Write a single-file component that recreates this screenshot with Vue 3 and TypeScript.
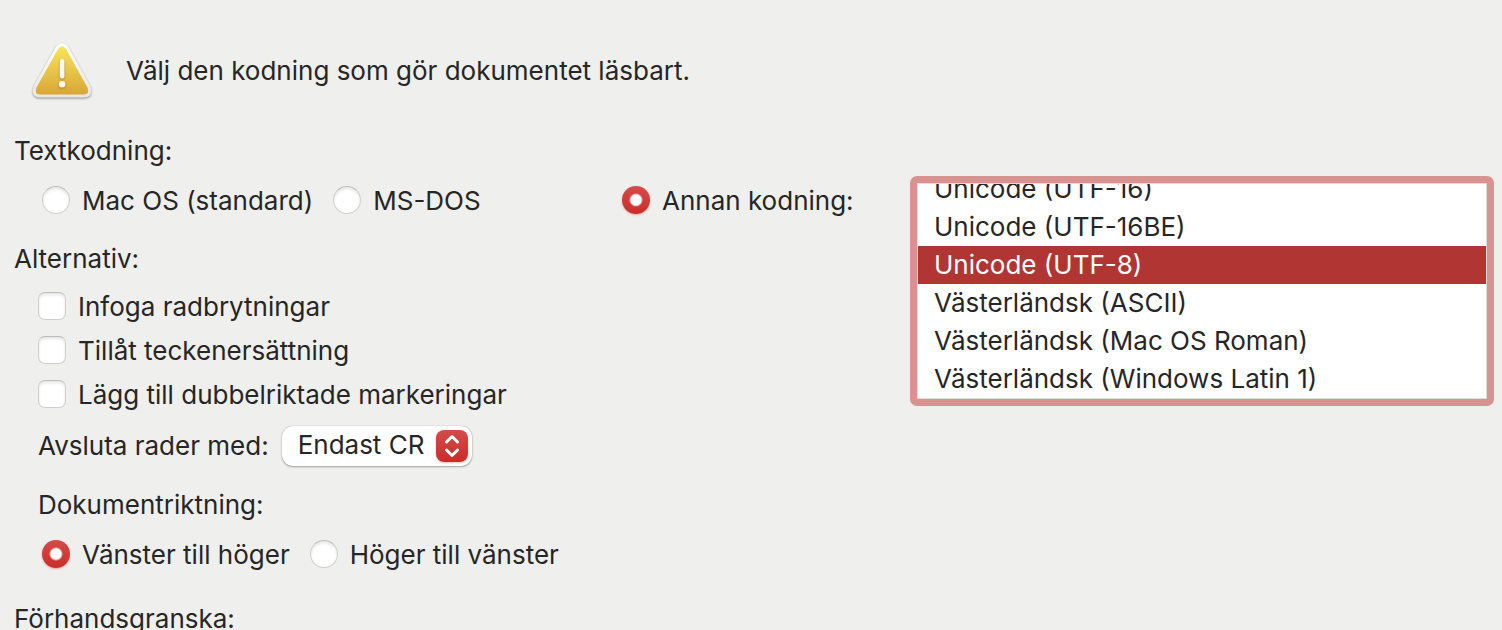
<script setup lang="ts">
import { nextTick, onMounted, ref } from 'vue'

const encodingMode = ref('other')
const encoding = ref('Unicode (UTF-8)')
const encodings: string[] = [
  'Unicode (UTF-16)',
  'Unicode (UTF-16BE)',
  'Unicode (UTF-8)',
  'Västerländsk (ASCII)',
  'Västerländsk (Mac OS Roman)',
  'Västerländsk (Windows Latin 1)',
]
const options = ref([
  { id: 'breaks', label: 'Infoga radbrytningar', on: false },
  { id: 'replace', label: 'Tillåt teckenersättning', on: false },
  { id: 'bidi', label: 'Lägg till dubbelriktade markeringar', on: false },
])
const lineEnding = ref('Endast CR')
const direction = ref('ltr')
const list = ref<HTMLSelectElement | null>(null)

function scrollToEnd() {
  if (list.value) list.value.scrollTop = list.value.scrollHeight
}

onMounted(async () => {
  await nextTick()
  scrollToEnd()
  requestAnimationFrame(() => requestAnimationFrame(scrollToEnd))
})
</script>

<template>
  <main class="dialog">
    <header class="message">
      <svg class="warning" viewBox="0 0 64 64" aria-hidden="true">
        <defs>
          <linearGradient id="gold" x1="0" y1="0" x2="0" y2="1">
            <stop offset="0" stop-color="#f8e45c" />
            <stop offset="1" stop-color="#d9a637" />
          </linearGradient>
          <linearGradient id="rim" x1="0" y1="0" x2="0" y2="1">
            <stop offset="0" stop-color="#ffffff" />
            <stop offset="1" stop-color="#e6e6e6" />
          </linearGradient>
        </defs>
        <path class="rim" d="M26 7.500Q32 0.500 38 7.500L60.500 47.500Q63.500 58 54.500 58.500H9.500Q0.500 58 3.500 47.500Z" fill="url(#rim)" />
        <path d="M28 10Q32 4.500 36 10L57.500 48.500Q60 55 54 55.500H10Q4 55 6.500 48.500Z" fill="url(#gold)" />
        <g class="mark" fill="#fbfbf6">
          <rect x="29.800" y="20" width="4.600" height="19.500" rx="2.300" />
          <circle cx="32.100" cy="45.300" r="3.200" />
        </g>
      </svg>
      <p>Välj den kodning som gör dokumentet läsbart.</p>
    </header>

    <div class="columns">
      <div class="settings">
        <h2 id="enc-title">Textkodning:</h2>
        <div class="radios" role="group" aria-labelledby="enc-title">
          <label class="choice"><input v-model="encodingMode" class="radio" type="radio" name="mode" value="mac" /><span>Mac OS (standard)</span></label>
          <label class="choice"><input v-model="encodingMode" class="radio" type="radio" name="mode" value="dos" /><span>MS-DOS</span></label>
        </div>

        <h2 class="alternatives">Alternativ:</h2>
        <div class="checks">
          <label v-for="o in options" :key="o.id" class="choice"><input v-model="o.on" class="box" type="checkbox" /><span>{{ o.label }}</span></label>
        </div>

        <div class="ending">
          <label for="ending">Avsluta rader med:</label>
          <div class="popup">
            <select id="ending" v-model="lineEnding">
              <option>Endast CR</option>
            </select>
            <svg class="arrows" viewBox="0 0 32 32" aria-hidden="true">
              <path d="M10.500 12L16 6.500L21.500 12M10.500 20L16 25.500L21.500 20" />
            </svg>
          </div>
        </div>

        <h2 id="dir-title" class="direction">Dokumentriktning:</h2>
        <div class="radios" role="group" aria-labelledby="dir-title">
          <label class="choice"><input v-model="direction" class="radio" type="radio" name="dir" value="ltr" /><span>Vänster till höger</span></label>
          <label class="choice"><input v-model="direction" class="radio" type="radio" name="dir" value="rtl" /><span>Höger till vänster</span></label>
        </div>
      </div>

      <label class="choice other"><input v-model="encodingMode" class="radio" type="radio" name="mode" value="other" /><span>Annan kodning:</span></label>

      <div class="listwrap">
        <select ref="list" v-model="encoding" class="list" size="5" aria-label="Annan kodning">
          <option v-for="e in encodings" :key="e" :value="e">{{ e }}</option>
        </select>
      </div>
    </div>

    <h2 class="preview">Förhandsgranska:</h2>
  </main>
</template>

<style>
html,
body {
  background: #efefed;
}
</style>

<style scoped>
.dialog {
  box-sizing: border-box;
  height: 100vh;
  overflow: hidden;
  padding: 39px 8px 0 14px;
  background: #efefed;
  color: #262626;
  font: 26px/32px Inter, "Liberation Sans", sans-serif;
}
.message {
  display: flex;
  align-items: center;
  gap: 32px;
  padding-left: 16px;
}
.warning {
  width: 64px;
  height: 64px;
  overflow: visible;
}
.rim {
  filter: drop-shadow(0 1px 1px rgba(0, 0, 0, 0.4));
}
.mark {
  filter: drop-shadow(0 1px 1px rgba(120, 80, 0, 0.5));
}
p,
h2 {
  margin: 0;
  font: inherit;
}
.columns {
  display: grid;
  grid-template-columns: minmax(560px, 608fr) 288px minmax(360px, 584fr);
  margin-top: 32px;
}
.radios {
  display: flex;
  gap: 20px;
  margin: 17px 0 0 28px;
}
.choice {
  display: flex;
  align-items: center;
  gap: 12px;
  height: 32px;
  white-space: nowrap;
}
.choice span {
  padding-top: 1px;
}
.radio,
.box {
  appearance: none;
  flex: none;
  width: 28px;
  height: 28px;
  margin: 0;
  border: 1px solid #cfcfcd;
  border-top-color: #bdbdbb;
  background: #fff;
  box-shadow: inset 0 2px 3px rgba(0, 0, 0, 0.1);
}
.radio {
  border-radius: 50%;
}
.box {
  border-radius: 7px;
}
.radio:checked {
  border: 0;
  background: radial-gradient(circle, #fff 5px, transparent 7px), linear-gradient(#d34c4b, #ca2d28);
  box-shadow: 0 1px 2px rgba(200, 40, 40, 0.35);
}
.box:checked {
  background: #ca2d28;
}
.alternatives {
  margin-top: 27px;
}
.checks {
  display: grid;
  gap: 12px;
  margin: 15px 0 0 24px;
}
.ending {
  display: flex;
  align-items: center;
  gap: 13px;
  margin: 16px 0 0 24px;
}
.popup {
  position: relative;
  width: 190px;
}
.popup select {
  appearance: none;
  display: block;
  box-sizing: border-box;
  width: 100%;
  height: 40px;
  padding: 0 40px 2px 16px;
  border: 0;
  border-radius: 11px;
  background: #fff;
  box-shadow: 0 0 1px rgba(0, 0, 0, 0.4), 0 1px 2px rgba(0, 0, 0, 0.3);
  color: inherit;
  font: inherit;
}
.arrows {
  position: absolute;
  top: 4px;
  right: 4px;
  width: 32px;
  height: 32px;
  border-radius: 8px;
  background: linear-gradient(#d34c4b, #ca2d28);
  box-shadow: 0 1px 2px rgba(200, 40, 40, 0.3);
  fill: none;
  stroke: #fff;
  stroke-width: 3;
  stroke-linecap: round;
  stroke-linejoin: round;
  pointer-events: none;
}
.direction {
  margin: 23px 0 0 24px;
}
.other {
  align-self: start;
  margin-top: 49px;
}
.listwrap {
  align-self: start;
  margin-top: 41px;
  padding: 7px;
  border-radius: 7px;
  background: #da9290;
}
.list {
  display: block;
  box-sizing: border-box;
  width: 100%;
  height: 216px;
  padding: 0;
  border: 1px solid #dedddd;
  border-radius: 0;
  outline: 0;
  background: #fff;
  color: #262626;
  font: inherit;
  scrollbar-width: none;
}
.list option {
  box-sizing: border-box;
  height: 38px;
  min-height: 38px;
  padding: 3px 16px 0;
}
.list option:checked {
  background: linear-gradient(#b13532, #b13532);
  -webkit-text-fill-color: #fff;
}
.preview {
  margin-top: 33px;
}
</style>
